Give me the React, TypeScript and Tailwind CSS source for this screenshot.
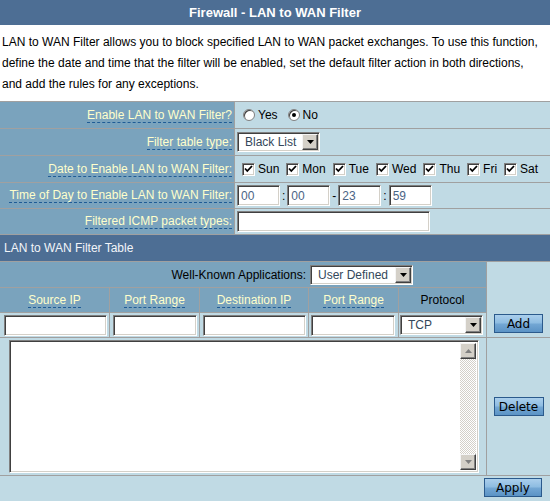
import React from 'react';

const TH = 'bg-[#7aa3bd]';
const TD = 'bg-[#c0dae4]';
const INSET =
  'border border-t-[#808080] border-l-[#808080] border-b-white border-r-white shadow-[inset_1px_1px_0_#404040,inset_-1px_-1px_0_#d4d0c8]';
const RAISED =
  'border border-t-[#f4f4f4] border-l-[#f4f4f4] border-b-[#404040] border-r-[#404040] shadow-[inset_-1px_-1px_0_#808080] bg-[#d4d0c8]';
const BTN =
  "flex h-[19px] items-center justify-center border border-[#2b5a8c] bg-[image:linear-gradient(#abcfec,#8fbde2_45%,#72a6d3_55%,#5b93c5)] pt-px font-['DejaVu_Sans',Verdana,sans-serif] text-[12px] leading-none text-black";

function Tip({ children }: { children: React.ReactNode }) {
  return (
    <span className="border-b border-dashed border-[#1f5c96] leading-[14px] text-[#ffffcc]">
      {children}
    </span>
  );
}

function DropArrow() {
  return (
    <span className={`flex h-[16px] w-[16px] shrink-0 items-center justify-center ${RAISED}`}>
      <svg width="7" height="4" viewBox="0 0 7 4">
        <path d="M0 0h7L3.5 4z" fill="#000" />
      </svg>
    </span>
  );
}

function Select({ value, className }: { value: string; className: string }) {
  return (
    <div className={`flex h-[20px] items-center justify-between bg-white pl-[7px] pr-[1px] text-[#34475a] ${INSET} ${className}`}>
      <span>{value}</span>
      <DropArrow />
    </div>
  );
}

function TextBox({ value, className }: { value?: string; className: string }) {
  return (
    <div className={`flex h-[21px] items-center bg-white pl-[3px] text-[#4b6485] ${INSET} ${className}`}>
      {value}
    </div>
  );
}

function Check({ label }: { label: string }) {
  return (
    <span className="flex items-center gap-[3px]">
      <span className={`flex h-[13px] w-[13px] items-center justify-center bg-white ${INSET}`}>
        <svg width="9" height="8" viewBox="0 0 9 8">
          <polyline points="1,3.5 3.3,6 8,1" fill="none" stroke="#000" strokeWidth="1.8" />
        </svg>
      </span>
      <span>{label}</span>
    </span>
  );
}

function Radio({ label, on }: { label: string; on?: boolean }) {
  return (
    <span className="flex items-center gap-[3px]">
      <span className="flex h-[12px] w-[12px] items-center justify-center rounded-full border border-[#808080] bg-white shadow-[inset_1px_1px_0_#404040]">
        {on && <span className="h-[4px] w-[4px] rounded-full bg-black" />}
      </span>
      <span>{label}</span>
    </span>
  );
}

function ScrollBtn({ up }: { up?: boolean }) {
  return (
    <span className={`flex h-[16px] w-[16px] items-center justify-center ${RAISED}`}>
      <svg width="7" height="4" viewBox="0 0 7 4">
        <path d={up ? 'M0 4h7L3.5 0z' : 'M0 0h7L3.5 4z'} fill="#808080" />
      </svg>
    </span>
  );
}

export default function App() {
  return (
    <div className="w-[550px] bg-white font-['Liberation_Sans',Arial,sans-serif] text-[12px] text-black">
      <div className="flex h-[25px] items-center justify-center bg-[#4d6e94] text-[13px] font-bold text-white">
        Firewall - LAN to WAN Filter
      </div>
      <p className="whitespace-nowrap px-[2px] pb-[6px] pt-[7px] leading-[21px]">
        LAN to WAN Filter allows you to block specified LAN to WAN packet exchanges. To use this function,
        <br />
        define the date and time that the filter will be enabled, set the default filter action in both directions,
        <br />
        and add the rules for any exceptions.
      </p>

      <div className="grid grid-cols-[234px_1fr] grid-rows-[26px_26px_26px_25px_25px] gap-px border-t border-[#a0a0a0] bg-[#a0a0a0]">
        <div className={`${TH} flex items-center justify-end pr-[2px]`}>
          <Tip>Enable LAN to WAN Filter?</Tip>
        </div>
        <div className={`${TD} flex items-center gap-[10px] pl-[8px]`}>
          <Radio label="Yes" />
          <Radio label="No" on />
        </div>

        <div className={`${TH} flex items-center justify-end pr-[2px]`}>
          <Tip>Filter table type:</Tip>
        </div>
        <div className={`${TD} flex items-center pl-[2px]`}>
          <Select value="Black List" className="w-[83px]" />
        </div>

        <div className={`${TH} flex items-center justify-end pr-[2px]`}>
          <Tip>Date to Enable LAN to WAN Filter:</Tip>
        </div>
        <div className={`${TD} flex items-center gap-[7px] pl-[7px]`}>
          {['Sun', 'Mon', 'Tue', 'Wed', 'Thu', 'Fri', 'Sat'].map((d) => (
            <Check key={d} label={d} />
          ))}
        </div>

        <div className={`${TH} flex items-center justify-end pr-[2px]`}>
          <Tip>Time of Day to Enable LAN to WAN Filter:</Tip>
        </div>
        <div className={`${TD} flex items-center gap-[2px] pl-[2px]`}>
          <TextBox value="00" className="w-[43px]" />
          <span>:</span>
          <TextBox value="00" className="w-[43px]" />
          <span>-</span>
          <TextBox value="23" className="w-[43px]" />
          <span>:</span>
          <TextBox value="59" className="w-[43px]" />
        </div>

        <div className={`${TH} flex items-center justify-end pr-[2px]`}>
          <Tip>Filtered ICMP packet types:</Tip>
        </div>
        <div className={`${TD} flex items-center pl-[2px]`}>
          <TextBox className="w-[193px]" />
        </div>
      </div>

      <div className="flex h-[27px] items-center border-t border-[#a0a0a0] bg-[#4d6e94] pl-[4px] text-[#f2f5f9]">
        LAN to WAN Filter Table
      </div>

      <div className="grid grid-cols-[109px_89px_108px_89px_87px_63px] grid-rows-[25px_24px_24px_137px_26px] gap-px border-t border-[#a0a0a0] bg-[#a0a0a0]">
        <div className={`${TH} col-span-5 col-start-1 row-start-1 flex items-center justify-end gap-[4px] pr-[73px]`}>
          <span>Well-Known Applications:</span>
          <Select value="User Defined" className="w-[103px]" />
        </div>
        <div className={`${TD} col-start-6 row-span-3 row-start-1 flex items-end justify-center pb-[4px]`}>
          <button className={`${BTN} w-[49px]`}>Add</button>
        </div>

        {['Source IP', 'Port Range', 'Destination IP', 'Port Range'].map((h, i) => (
          <div key={i} className={`${TH} row-start-2 flex items-center justify-center`}>
            <Tip>{h}</Tip>
          </div>
        ))}
        <div className={`${TH} row-start-2 flex items-center justify-center`}>Protocol</div>

        <div className={`${TD} row-start-3 flex items-center pl-[4px] pr-[2px]`}>
          <TextBox className="w-full" />
        </div>
        <div className={`${TD} row-start-3 flex items-center pl-[3px] pr-[2px]`}>
          <TextBox className="w-full" />
        </div>
        <div className={`${TD} row-start-3 flex items-center pl-[3px] pr-[2px]`}>
          <TextBox className="w-full" />
        </div>
        <div className={`${TD} row-start-3 flex items-center pl-[2px] pr-[3px]`}>
          <TextBox className="w-full" />
        </div>
        <div className={`${TD} row-start-3 flex items-center pl-[1px] pr-[3px]`}>
          <Select value="TCP" className="w-full" />
        </div>

        <div className={`${TD} col-span-5 row-start-4 pl-[9px] pt-[2px]`}>
          <div className={`flex h-[133px] w-[470px] justify-end bg-white p-[2px] ${INSET}`}>
            <div className="flex w-[16px] flex-col">
              <ScrollBtn up />
              <div className="flex-1 bg-[image:repeating-conic-gradient(#d4d0c8_0%_25%,#ffffff_0%_50%)] bg-[length:2px_2px]" />
              <ScrollBtn />
            </div>
          </div>
        </div>
        <div className={`${TD} row-start-4 flex items-center justify-center`}>
          <button className={`${BTN} w-[50px]`}>Delete</button>
        </div>

        <div className={`${TD} col-span-6 row-start-5 flex items-start justify-end pr-[8px] pt-[2px]`}>
          <button className={`${BTN} w-[58px]`}>Apply</button>
        </div>
      </div>
    </div>
  );
}
